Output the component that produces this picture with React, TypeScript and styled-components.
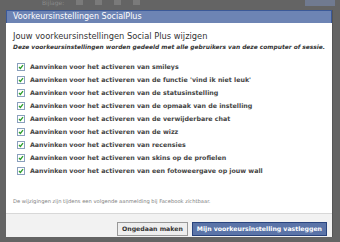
import React from "react";
import styled, { createGlobalStyle } from "styled-components";

const Global = createGlobalStyle`
  html, body { margin: 0; padding: 0; background: #646464; }
  body { width: 340px; height: 242px; overflow: hidden; font-family: "DejaVu Sans", Tahoma, sans-serif; }
`;

const Frame = styled.div`
  width: 340px;
  height: 242px;
  display: flex;
  flex-direction: column;
  background: #646464;
`;

const PageStrip = styled.div`
  height: 10px;
  display: flex;
  align-items: flex-start;
  padding-left: 42px;
  padding-right: 5px;
  gap: 4px;
  overflow: hidden;
  font-size: 6px;
  line-height: 6px;
  color: #8a8a8a;
`;

const StripIcon = styled.span`
  width: 7px;
  height: 5px;
  background: #7a7a7a;
  margin-left: 8px;
`;

const StripSpacer = styled.span`
  flex: 1;
`;

const StripButton = styled.span`
  width: 30px;
  height: 6px;
  background: #707a90;
`;

const Dialog = styled.div`
  margin: 0 7px 0 6px;
  flex: 1;
  display: flex;
  flex-direction: column;
  background: #fff;
  border-right: 1px solid #555;
`;

const Header = styled.div`
  height: 12px;
  background: #6d84b4;
  border: 1px solid #3b5998;
  border-bottom: none;
  color: #fff;
  font-size: 8px;
  line-height: 12px;
  padding-left: 6px;
`;

const Body = styled.div`
  flex: 1;
  padding: 8px 7px 0 7px;
  display: flex;
  flex-direction: column;
`;

const Title = styled.div`
  font-size: 8.3px;
  line-height: 11px;
  color: #333;
`;

const Subtitle = styled.div`
  font-size: 5.9px;
  line-height: 10px;
  font-weight: bold;
  font-style: italic;
  color: #333;
  white-space: nowrap;
`;

const List = styled.div`
  margin-top: 8px;
  display: flex;
  flex-direction: column;
  padding-left: 4px;
`;

const Row = styled.label`
  height: 13px;
  display: flex;
  align-items: center;
  gap: 5px;
  font-size: 6.3px;
  font-weight: bold;
  color: #444;
  white-space: nowrap;
`;

const Box = styled.span`
  width: 6px;
  height: 6px;
  border: 1px solid #8aa0bd;
  background: #fff;
  display: flex;
  align-items: center;
  justify-content: center;
`;

const Note = styled.div`
  margin-top: 20px;
  font-size: 5.2px;
  line-height: 9px;
  color: #808080;
`;

const Footer = styled.div`
  height: 24px;
  background: #f2f2f2;
  border-top: 1px solid #d8d8d8;
  display: flex;
  justify-content: flex-end;
  align-items: flex-start;
  padding: 8px 5px 0 0;
  gap: 4px;
  box-sizing: border-box;
`;

const Button = styled.button<{ $primary?: boolean }>`
  height: 14px;
  padding: 0 4px;
  border: 1px solid ${(p) => (p.$primary ? "#29447e" : "#999")};
  background: ${(p) => (p.$primary ? "#5b74a8" : "#eeeeee")};
  color: ${(p) => (p.$primary ? "#fff" : "#333")};
  font-family: "DejaVu Sans", sans-serif;
  font-weight: bold;
  font-size: 6.2px;
  line-height: 12px;
  white-space: nowrap;
`;

const Bottom = styled.div`
  height: 5px;
`;

const Check = () => (
  <svg width="6" height="6" viewBox="0 0 6 6">
    <path d="M1 3 L2.4 4.5 L5 1.2" fill="none" stroke="#2a9d2a" strokeWidth="1.3" />
  </svg>
);

const items = [
  "Aanvinken voor het activeren van smileys",
  "Aanvinken voor het activeren van de functie 'vind ik niet leuk'",
  "Aanvinken voor het activeren van de statusinstelling",
  "Aanvinken voor het activeren van de opmaak van de instelling",
  "Aanvinken voor het activeren van de verwijderbare chat",
  "Aanvinken voor het activeren van de wizz",
  "Aanvinken voor het activeren van recensies",
  "Aanvinken voor het activeren van skins op de profielen",
  "Aanvinken voor het activeren van een fotoweergave op jouw wall",
];

export default function App() {
  return (
    <Frame>
      <Global />
      <PageStrip>
        <span>Bijlage:</span>
        <StripIcon />
        <StripIcon />
        <StripIcon />
        <StripIcon />
        <StripSpacer />
        <StripButton />
      </PageStrip>
      <Dialog>
        <Header>Voorkeursinstellingen SocialPlus</Header>
        <Body>
          <Title>Jouw voorkeursinstellingen Social Plus wijzigen</Title>
          <Subtitle>
            Deze voorkeursinstellingen worden gedeeld met alle gebruikers van deze computer of sessie.
          </Subtitle>
          <List>
            {items.map((t) => (
              <Row key={t}>
                <Box>
                  <Check />
                </Box>
                {t}
              </Row>
            ))}
          </List>
          <Note>De wijzigingen zijn tijdens een volgende aanmelding bij Facebook zichtbaar.</Note>
        </Body>
        <Footer>
          <Button>Ongedaan maken</Button>
          <Button $primary>Mijn voorkeursinstelling vastleggen</Button>
        </Footer>
      </Dialog>
      <Bottom />
    </Frame>
  );
}
